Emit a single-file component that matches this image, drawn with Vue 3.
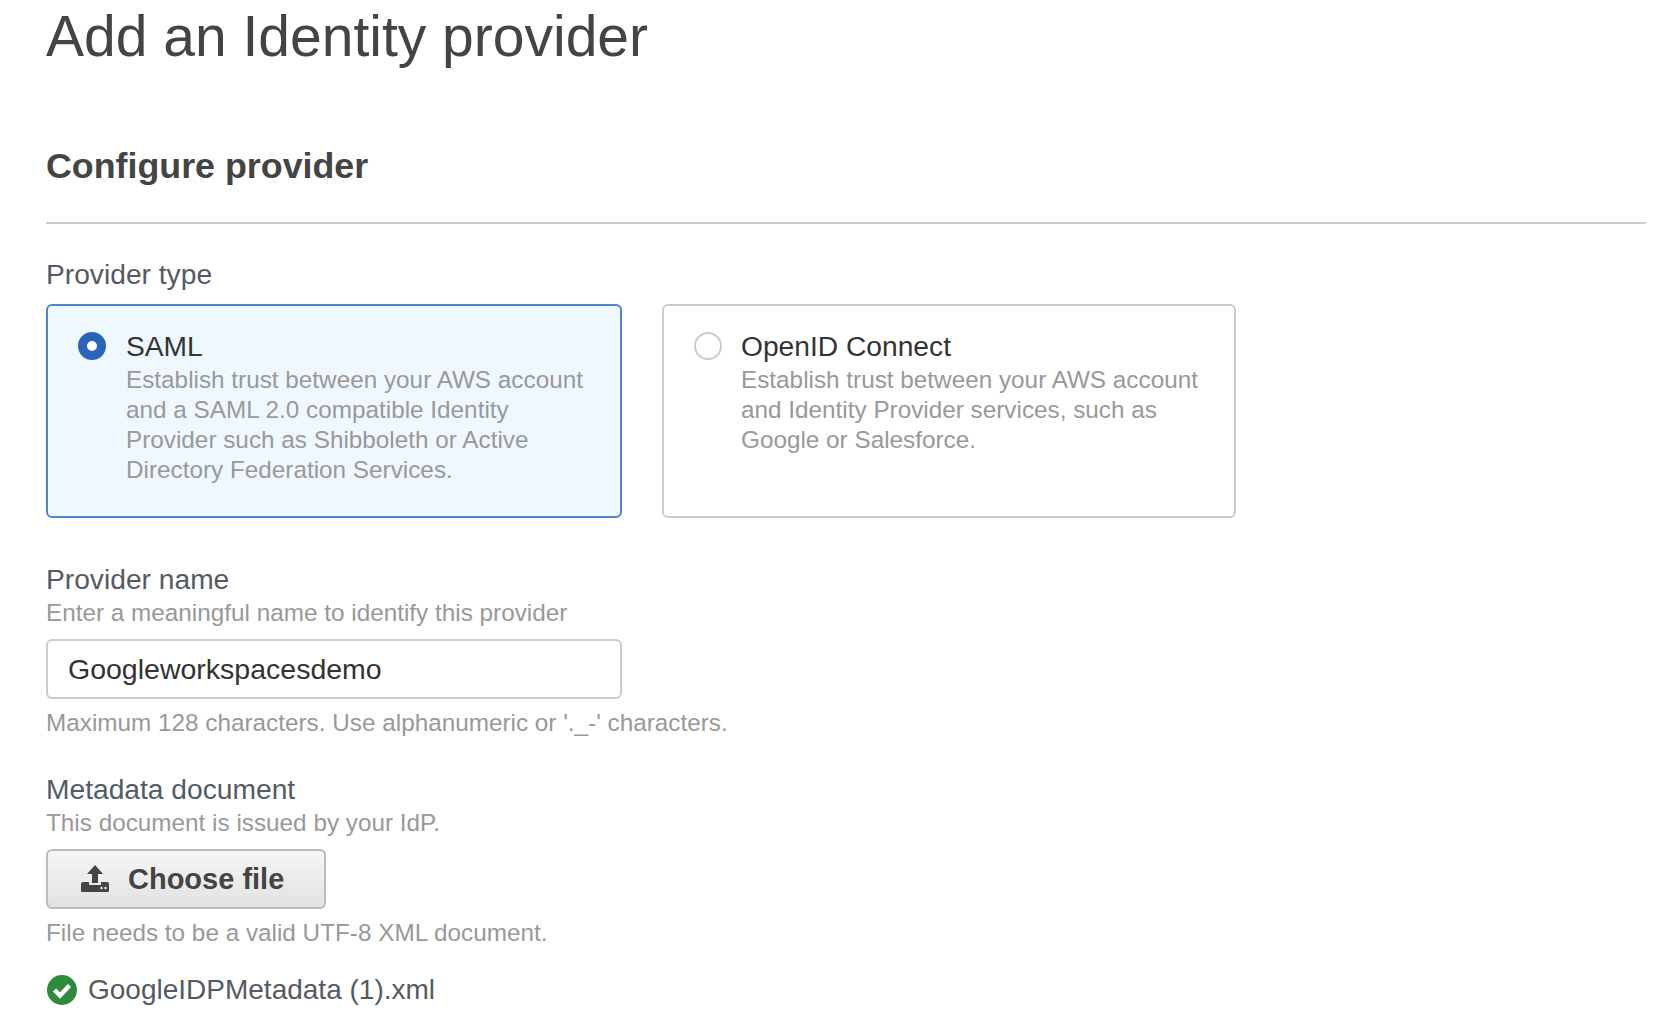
<template>
  <div class="page">
    <h1 class="title">Add an Identity provider</h1>
    <h2 class="section">Configure provider</h2>

    <div class="field-label type-label">Provider type</div>
    <div class="cards">
      <div v-for="card in cards" :key="card.name" class="card" :class="{ selected: card.selected }">
        <span class="radio"></span>
        <div>
          <div class="card-name">{{ card.name }}</div>
          <div class="card-desc">
            <div v-for="line in card.lines" :key="line">{{ line }}</div>
          </div>
        </div>
      </div>
    </div>

    <div class="field-label name-label">Provider name</div>
    <div class="hint">Enter a meaningful name to identify this provider</div>
    <input class="text-input" type="text" value="Googleworkspacesdemo" />
    <div class="hint below">Maximum 128 characters. Use alphanumeric or '._-' characters.</div>

    <div class="field-label meta-label">Metadata document</div>
    <div class="hint">This document is issued by your IdP.</div>
    <button class="file-btn" type="button">
      <svg width="30" height="28" viewBox="0 0 30 28">
        <path d="M15 0 L23 9 H18 V18 H12 V9 H7 Z" fill="#444" />
        <path d="M1 19 Q1 17 3 17 H9 V20 H21 V17 H27 Q29 17 29 19 V26 Q29 27 28 27 H2 Q1 27 1 26 Z" fill="#444" />
        <circle cx="21.5" cy="23" r="1.2" fill="#eee" />
        <circle cx="25.5" cy="23" r="1.2" fill="#eee" />
      </svg>
      <span>Choose file</span>
    </button>
    <div class="hint file-hint">File needs to be a valid UTF-8 XML document.</div>

    <div class="file-row">
      <svg width="30" height="30" viewBox="0 0 30 30">
        <circle cx="15" cy="15" r="15" fill="#2e8b3d" />
        <path d="M7.5 15 L13 20.5 L22.5 10.5" fill="none" stroke="#fff" stroke-width="4.5" />
      </svg>
      <span>GoogleIDPMetadata (1).xml</span>
    </div>
  </div>
</template>

<script setup>
const cards = [
  {
    name: 'SAML',
    selected: true,
    lines: [
      'Establish trust between your AWS account',
      'and a SAML 2.0 compatible Identity',
      'Provider such as Shibboleth or Active',
      'Directory Federation Services.'
    ]
  },
  {
    name: 'OpenID Connect',
    selected: false,
    lines: [
      'Establish trust between your AWS account',
      'and Identity Provider services, such as',
      'Google or Salesforce.'
    ]
  }
]
</script>

<style scoped>
.page {
  width: 1672px;
  height: 1020px;
  overflow: hidden;
  box-sizing: border-box;
  padding: 0 26px 0 46px;
  font-family: "Liberation Sans", Arial, sans-serif;
  color: #444;
}

.title {
  margin: 4px 0 0;
  font-size: 57px;
  line-height: 64px;
  font-weight: 400;
}

.section {
  margin: 77px 0 0;
  padding-bottom: 35px;
  border-bottom: 2px solid #ccc;
  font-size: 35.8px;
  line-height: 42px;
  font-weight: 700;
}

.field-label {
  font-size: 28.2px;
  line-height: 34px;
  color: #545b64;
}

.type-label {
  margin-top: 33px;
}

.cards {
  display: flex;
  gap: 40px;
  margin-top: 13px;
}

.card {
  display: flex;
  gap: 20px;
  width: 576px;
  height: 214px;
  box-sizing: border-box;
  padding: 24px 20px 0 30px;
  border: 2px solid #ccc;
  border-radius: 6px;
}

.card:not(.selected) {
  width: 574px;
  gap: 19px;
}

.card.selected {
  background: #f0f8ff;
  border-color: #4a86d4;
}

.radio {
  flex: none;
  width: 28px;
  height: 28px;
  margin-top: 2px;
  box-sizing: border-box;
  border: 2px solid #ccc;
  border-radius: 50%;
  background: #fff;
}

.selected .radio {
  border: 9px solid #2a64b8;
}

.card-name {
  font-size: 28.2px;
  line-height: 33px;
  color: #333;
}

.card-desc {
  margin-top: 2px;
  font-size: 24.3px;
  line-height: 30px;
  color: #999;
}

.name-label {
  margin-top: 44px;
}

.hint {
  margin-top: 2px;
  font-size: 24.3px;
  line-height: 30px;
  color: #999;
}

.hint.below {
  margin-top: 9px;
}

.text-input {
  display: block;
  width: 576px;
  height: 60px;
  box-sizing: border-box;
  margin-top: 11px;
  padding: 0 20px;
  border: 2px solid #ccc;
  border-radius: 6px;
  font-family: inherit;
  font-size: 28.5px;
  color: #333;
}

.meta-label {
  margin-top: 34px;
}

.file-btn {
  display: flex;
  align-items: center;
  gap: 18px;
  width: 280px;
  height: 60px;
  box-sizing: border-box;
  margin-top: 11px;
  padding: 0 0 0 32px;
  border: 2px solid #bbb;
  border-radius: 6px;
  background: linear-gradient(#f6f6f6, #e2e2e2);
  font-family: inherit;
  font-size: 29px;
  font-weight: 700;
  color: #444;
}

.hint.file-hint {
  margin-top: 9px;
}

.file-row {
  display: flex;
  align-items: center;
  gap: 11px;
  margin-top: 26px;
  margin-left: 1px;
  font-size: 28px;
  color: #545b64;
}
</style>
